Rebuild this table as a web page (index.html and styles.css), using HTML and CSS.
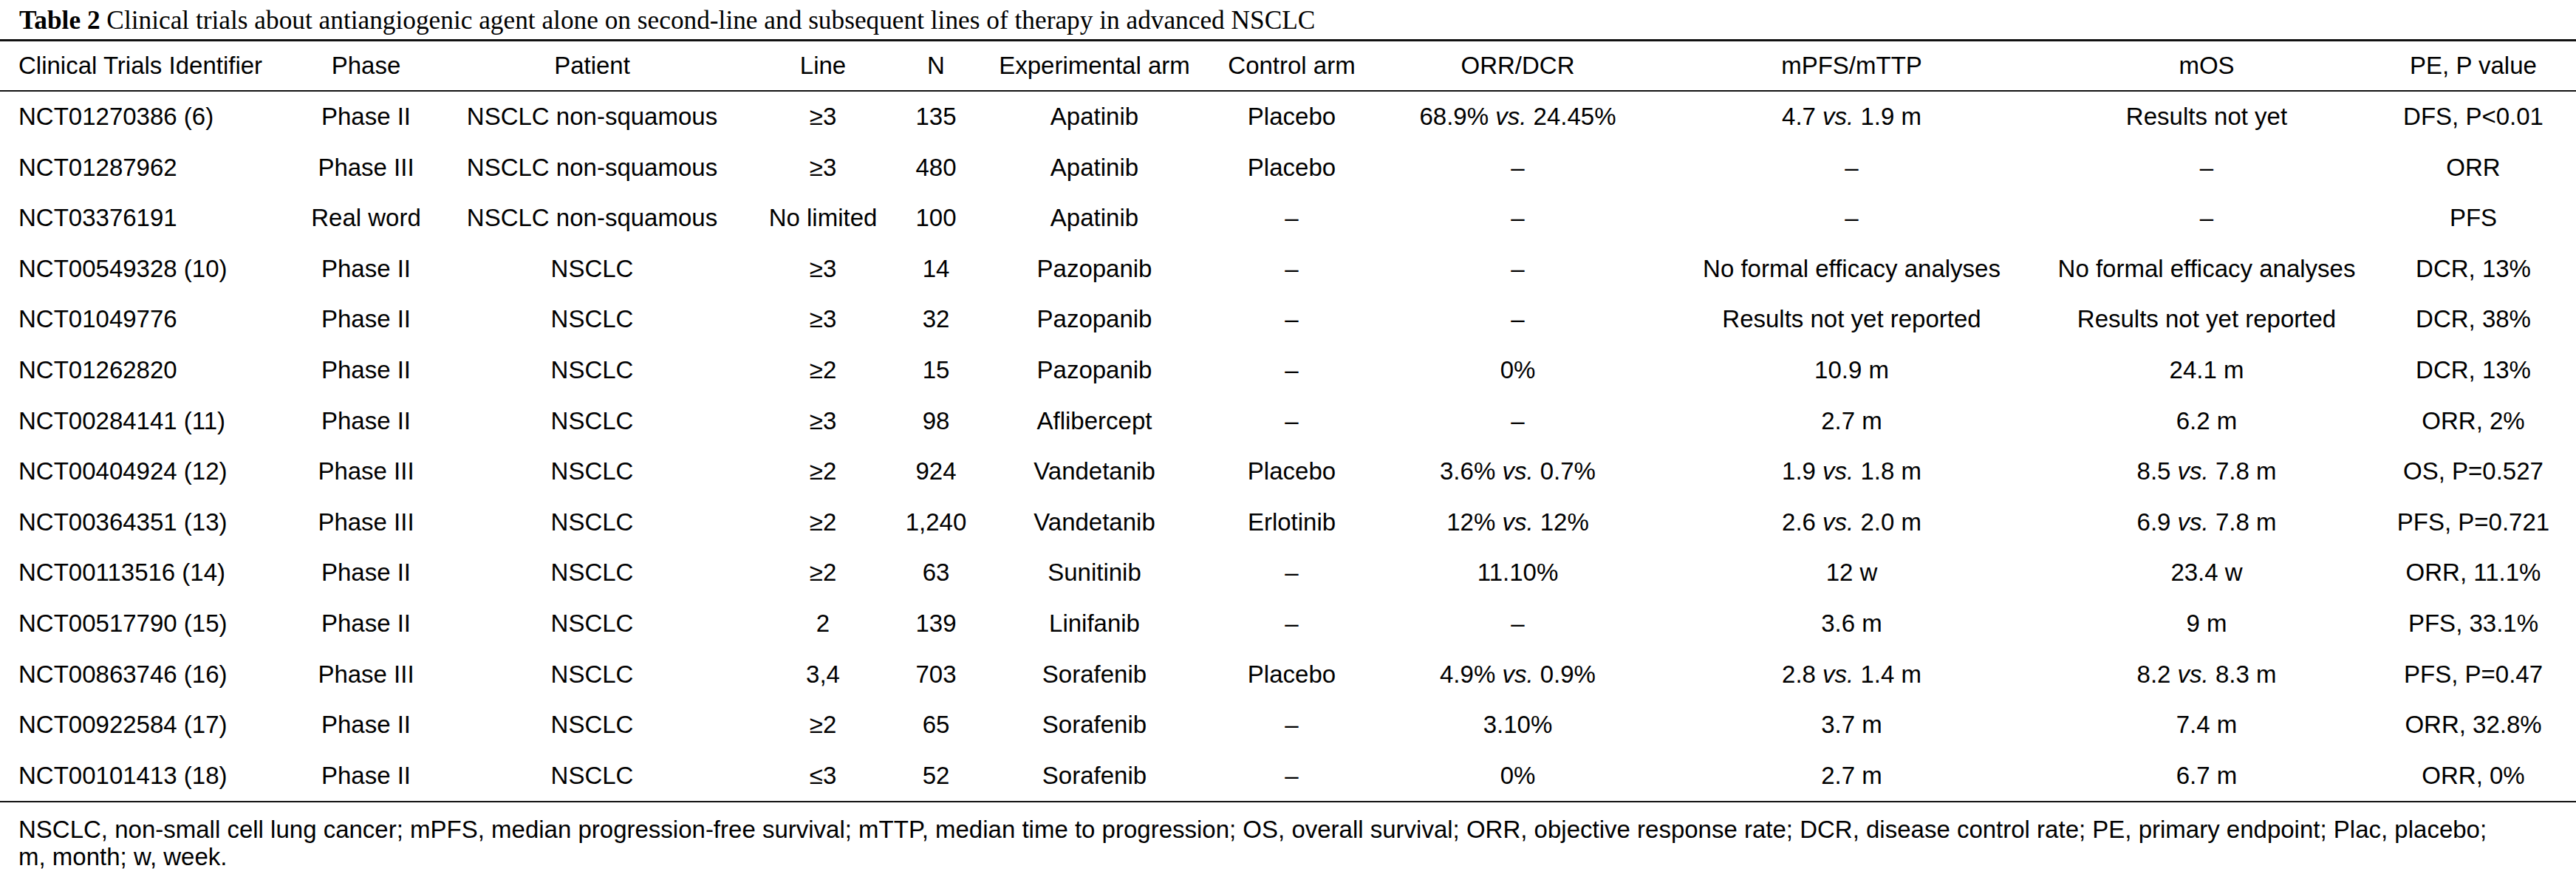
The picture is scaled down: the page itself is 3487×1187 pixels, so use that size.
FILE: index.html
```html
<!DOCTYPE html>
<html lang="en">
<head>
<meta charset="utf-8">
<title>Table 2</title>
<link rel="stylesheet" href="styles.css">
</head>
<body>
<div class="page">
  <div class="caption"><b>Table 2</b> Clinical trials about antiangiogenic agent alone on second-line and subsequent lines of therapy in advanced NSCLC</div>
  <table class="trials">
    <colgroup>
      <col class="c-id"><col class="c-phase"><col class="c-patient"><col class="c-line"><col class="c-n"><col class="c-exp"><col class="c-ctrl"><col class="c-orr"><col class="c-pfs"><col class="c-os"><col class="c-pe">
    </colgroup>
    <thead>
      <tr>
        <th class="left">Clinical Trials Identifier</th><th>Phase</th><th>Patient</th><th>Line</th><th>N</th><th>Experimental arm</th><th>Control arm</th><th>ORR/DCR</th><th>mPFS/mTTP</th><th>mOS</th><th>PE, P value</th>
      </tr>
    </thead>
    <tbody>
      <tr><td class="left">NCT01270386 (6)</td><td>Phase II</td><td>NSCLC non-squamous</td><td>≥3</td><td>135</td><td>Apatinib</td><td>Placebo</td><td>68.9% <i>vs.</i> 24.45%</td><td>4.7 <i>vs.</i> 1.9 m</td><td>Results not yet</td><td>DFS, P&lt;0.01</td></tr>
      <tr><td class="left">NCT01287962</td><td>Phase III</td><td>NSCLC non-squamous</td><td>≥3</td><td>480</td><td>Apatinib</td><td>Placebo</td><td>–</td><td>–</td><td>–</td><td>ORR</td></tr>
      <tr><td class="left">NCT03376191</td><td>Real word</td><td>NSCLC non-squamous</td><td>No limited</td><td>100</td><td>Apatinib</td><td>–</td><td>–</td><td>–</td><td>–</td><td>PFS</td></tr>
      <tr><td class="left">NCT00549328 (10)</td><td>Phase II</td><td>NSCLC</td><td>≥3</td><td>14</td><td>Pazopanib</td><td>–</td><td>–</td><td>No formal efficacy analyses</td><td>No formal efficacy analyses</td><td>DCR, 13%</td></tr>
      <tr><td class="left">NCT01049776</td><td>Phase II</td><td>NSCLC</td><td>≥3</td><td>32</td><td>Pazopanib</td><td>–</td><td>–</td><td>Results not yet reported</td><td>Results not yet reported</td><td>DCR, 38%</td></tr>
      <tr><td class="left">NCT01262820</td><td>Phase II</td><td>NSCLC</td><td>≥2</td><td>15</td><td>Pazopanib</td><td>–</td><td>0%</td><td>10.9 m</td><td>24.1 m</td><td>DCR, 13%</td></tr>
      <tr><td class="left">NCT00284141 (11)</td><td>Phase II</td><td>NSCLC</td><td>≥3</td><td>98</td><td>Aflibercept</td><td>–</td><td>–</td><td>2.7 m</td><td>6.2 m</td><td>ORR, 2%</td></tr>
      <tr><td class="left">NCT00404924 (12)</td><td>Phase III</td><td>NSCLC</td><td>≥2</td><td>924</td><td>Vandetanib</td><td>Placebo</td><td>3.6% <i>vs.</i> 0.7%</td><td>1.9 <i>vs.</i> 1.8 m</td><td>8.5 <i>vs.</i> 7.8 m</td><td>OS, P=0.527</td></tr>
      <tr><td class="left">NCT00364351 (13)</td><td>Phase III</td><td>NSCLC</td><td>≥2</td><td>1,240</td><td>Vandetanib</td><td>Erlotinib</td><td>12% <i>vs.</i> 12%</td><td>2.6 <i>vs.</i> 2.0 m</td><td>6.9 <i>vs.</i> 7.8 m</td><td>PFS, P=0.721</td></tr>
      <tr><td class="left">NCT00113516 (14)</td><td>Phase II</td><td>NSCLC</td><td>≥2</td><td>63</td><td>Sunitinib</td><td>–</td><td>11.10%</td><td>12 w</td><td>23.4 w</td><td>ORR, 11.1%</td></tr>
      <tr><td class="left">NCT00517790 (15)</td><td>Phase II</td><td>NSCLC</td><td>2</td><td>139</td><td>Linifanib</td><td>–</td><td>–</td><td>3.6 m</td><td>9 m</td><td>PFS, 33.1%</td></tr>
      <tr><td class="left">NCT00863746 (16)</td><td>Phase III</td><td>NSCLC</td><td>3,4</td><td>703</td><td>Sorafenib</td><td>Placebo</td><td>4.9% <i>vs.</i> 0.9%</td><td>2.8 <i>vs.</i> 1.4 m</td><td>8.2 <i>vs.</i> 8.3 m</td><td>PFS, P=0.47</td></tr>
      <tr><td class="left">NCT00922584 (17)</td><td>Phase II</td><td>NSCLC</td><td>≥2</td><td>65</td><td>Sorafenib</td><td>–</td><td>3.10%</td><td>3.7 m</td><td>7.4 m</td><td>ORR, 32.8%</td></tr>
      <tr class="last"><td class="left">NCT00101413 (18)</td><td>Phase II</td><td>NSCLC</td><td>≤3</td><td>52</td><td>Sorafenib</td><td>–</td><td>0%</td><td>2.7 m</td><td>6.7 m</td><td>ORR, 0%</td></tr>
    </tbody>
  </table>
  <p class="notes">NSCLC, non-small cell lung cancer; mPFS, median progression-free survival; mTTP, median time to progression; OS, overall survival; ORR, objective response rate; DCR, disease control rate; PE, primary endpoint; Plac, placebo;<br>m, month; w, week.</p>
</div>
</body>
</html>
```

FILE: styles.css
```css
html, body {
  margin: 0;
  padding: 0;
  background: #fff;
}

.page {
  width: 3487px;
  color: #000;
  font-family: "Liberation Sans", Arial, sans-serif;
  font-size: 33px;
}

.caption {
  font-family: "Liberation Serif", "Times New Roman", serif;
  font-size: 35.3px;
  line-height: 40px;
  padding: 8px 0 5px 26px;
  white-space: nowrap;
}

.caption b {
  font-weight: bold;
}

.trials {
  width: 3487px;
  table-layout: fixed;
  border-collapse: separate;
  border-spacing: 0;
}

.c-id { width: 409px; }
.c-phase { width: 173px; }
.c-patient { width: 439px; }
.c-line { width: 186px; }
.c-n { width: 120px; }
.c-exp { width: 309px; }
.c-ctrl { width: 225px; }
.c-orr { width: 387px; }
.c-pfs { width: 517px; }
.c-os { width: 444px; }
.c-pe { width: 278px; }

.trials th,
.trials td {
  padding: 0;
  text-align: center;
  white-space: nowrap;
  font-weight: normal;
  vertical-align: middle;
}

.trials th {
  line-height: 66px;
  border-top: 3px solid #111;
  border-bottom: 2px solid #111;
}

.trials td {
  line-height: 68.6px;
}

.trials .left {
  text-align: left;
  padding-left: 25px;
}

.trials .last td {
  border-bottom: 2px solid #111;
}

.trials i {
  font-style: italic;
}

.notes {
  margin: 0;
  padding: 18px 0 0 25px;
  line-height: 37px;
  white-space: nowrap;
}
```
